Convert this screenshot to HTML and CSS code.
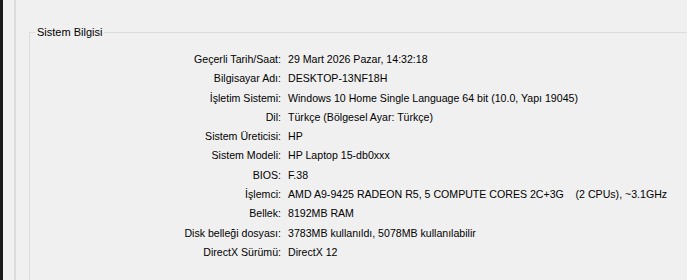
FILE: index.html
```
<!DOCTYPE html>
<html lang="tr">
<head>
  <meta charset="UTF-8">
  <link rel="stylesheet" href="styles.css">
  <title>DirectX Tanı Aracı</title>
</head>
<body>
  <div class="wrap">
    <div class="edge"></div>
    <div class="panel">
      <fieldset class="group">
        <legend>Sistem Bilgisi</legend>
        <dl class="info">
          <dt>Geçerli Tarih/Saat:</dt><dd>29 Mart 2026 Pazar, 14:32:18</dd>
          <dt>Bilgisayar Adı:</dt><dd>DESKTOP-13NF18H</dd>
          <dt>İşletim Sistemi:</dt><dd>Windows 10 Home Single Language 64 bit (10.0, Yapı 19045)</dd>
          <dt>Dil:</dt><dd>Türkçe (Bölgesel Ayar: Türkçe)</dd>
          <dt>Sistem Üreticisi:</dt><dd>HP</dd>
          <dt>Sistem Modeli:</dt><dd>HP Laptop 15-db0xxx</dd>
          <dt>BIOS:</dt><dd>F.38</dd>
          <dt>İşlemci:</dt><dd>AMD A9-9425 RADEON R5, 5 COMPUTE CORES 2C+3G&nbsp;&nbsp;&nbsp;&nbsp;(2 CPUs), ~3.1GHz</dd>
          <dt>Bellek:</dt><dd>8192MB RAM</dd>
          <dt>Disk belleği dosyası:</dt><dd>3783MB kullanıldı, 5078MB kullanılabilir</dd>
          <dt>DirectX Sürümü:</dt><dd>DirectX 12</dd>
        </dl>
      </fieldset>
    </div>
  </div>
</body>
</html>
```
FILE: styles.css
```
body, dl, dt, dd, fieldset, legend{
  margin:0px; padding:0px;
}

body{
  background:#f0f0f0; color:#000;
  font-family:"Liberation Sans", Arial, sans-serif; font-size:10.6px;
  height:280px; overflow:hidden;
}

.wrap{
  display:flex; height:280px;
}

.edge{
  width:3px; background:#1a1a1a; flex:none;
}

.panel{
  flex:1; margin-left:11px; border-left:2px solid #dcdcdc; padding:26px 0px 0px 13px;
  display:flex; flex-direction:column; min-width:0px;
}

fieldset.group{
  flex:1; min-height:0px; overflow:hidden;
  border:1px solid #dcdcdc; border-right:none; border-bottom:none;
  padding:12px 0px 0px 0px;
}

legend{
  padding:0px 2px; margin-left:5px; font-size:11px;
}

dl.info{
  display:grid; grid-template-columns:251px 1fr; column-gap:7px; line-height:19.3px;
}

dt{
  text-align:right; white-space:nowrap;
}

dd{
  white-space:nowrap;
}
```
